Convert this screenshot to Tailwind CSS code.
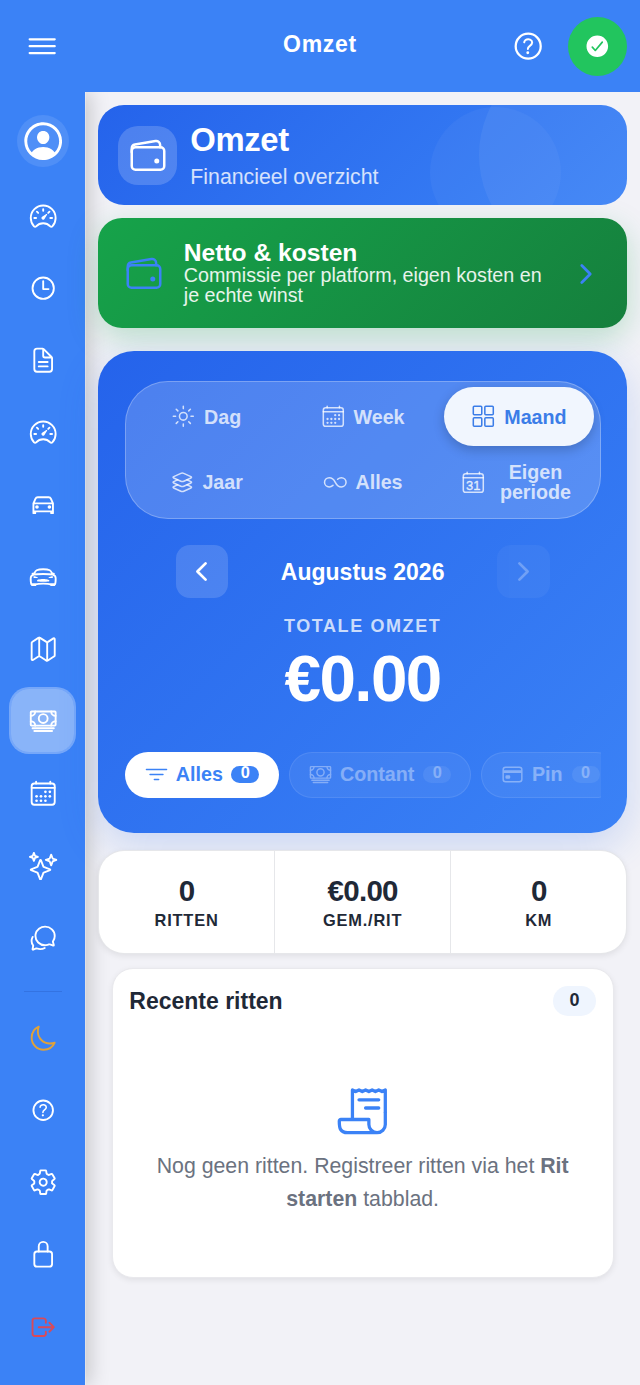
<!DOCTYPE html>
<html lang="nl">
<head>
<meta charset="utf-8">
<meta name="viewport" content="width=device-width, initial-scale=1">
<title>Omzet</title>
<script src="https://cdn.jsdelivr.net/npm/@tailwindcss/browser@4"></script>
</head>
<body class="h-[1385px] w-[640px] overflow-hidden bg-[#f2f2f7] font-['Liberation_Sans',Arial,sans-serif] text-[#1f2937]">

<!-- Icon sprite -->
<svg class="hidden" xmlns="http://www.w3.org/2000/svg">
  <defs>
    <symbol id="menu" viewBox="0 0 512 512"><path d="M80 160h352M80 256h352M80 352h352"/></symbol>
    <symbol id="help" viewBox="0 0 512 512"><path d="M256 80a176 176 0 10176 176A176 176 0 00256 80z"/><path stroke-width="28" d="M200 202.29s.84-17.5 19.57-32.57C230.68 160.77 244 158.18 256 158c10.93-.14 20.69 1.67 26.53 4.45 10 4.76 29.47 16.38 29.47 41.09 0 26-17 37.81-36.37 50.8S251 281.43 251 296"/><circle cx="250" cy="348" r="20" fill="currentColor" stroke="none"/></symbol>
    <symbol id="check" viewBox="0 0 512 512"><path fill="currentColor" stroke="none" d="M256 48C141.31 48 48 141.31 48 256s93.31 208 208 208 208-93.31 208-208S370.69 48 256 48zm108.25 138.29l-134.4 160a16 16 0 01-12 5.71h-.27a16 16 0 01-11.89-5.3l-57.6-64a16 16 0 1123.78-21.4l45.29 50.32 122.59-145.91a16 16 0 0124.5 20.58z"/></symbol>
    <symbol id="person" viewBox="0 0 512 512"><path fill="currentColor" stroke="none" d="M258.9 48C141.92 46.42 46.42 141.92 48 258.9c1.56 112.19 92.91 203.54 205.1 205.1 117 1.6 212.48-93.9 210.88-210.88C462.44 140.91 371.09 49.56 258.9 48zm126.42 327.25a4 4 0 01-6.14-.32 124.27 124.27 0 00-32.35-29.59C321.37 329 289.11 320 256 320s-65.37 9-90.83 25.34a124.24 124.24 0 00-32.35 29.58 4 4 0 01-6.14.32A175.32 175.32 0 0180 259c-1.63-97.31 78.22-178.76 175.57-179S432 158.81 432 256a175.32 175.32 0 01-46.68 119.25z"/><path fill="currentColor" stroke="none" d="M256 144c-19.72 0-37.55 7.39-50.22 20.82s-19 32-17.57 51.93C191.11 256 221.52 288 256 288s64.83-32 67.79-71.24c1.48-19.74-4.8-38.14-17.68-51.82C293.39 151.44 275.59 144 256 144z"/></symbol>
    <symbol id="wallet" viewBox="0 0 512 512"><rect x="48" y="144" width="416" height="288" rx="48" ry="48"/><path d="M411.36 144v-30A50 50 0 00352 64.9L88.64 109.85A50 50 0 0048 159v49"/><circle cx="368" cy="320" r="32" fill="currentColor" stroke="none"/></symbol>
    <symbol id="speed" viewBox="0 0 512 512"><path fill="currentColor" stroke="none" d="M326.1 231.9l-47.5 75.5a31 31 0 01-7 7 30.11 30.11 0 01-35-49l75.5-47.5a10.23 10.23 0 0111.7 0 10.06 10.06 0 012.3 14z"/><path d="M256 64C132.3 64 32 164.2 32 287.9a223.18 223.18 0 0056.3 148.5c1.1 1.2 2.1 2.4 3.2 3.5a25.19 25.19 0 0037.1-.1 173.13 173.13 0 01254.8 0 25.19 25.19 0 0037.1.1l3.2-3.5A223.18 223.18 0 00480 287.9C480 164.2 379.7 64 256 64zM256 128v32M416 288h-32M128 288H96M165.49 197.49l-22.63-22.63M346.51 197.49l22.63-22.63"/></symbol>
    <symbol id="time" viewBox="0 0 512 512"><path d="M256 64C150 64 64 150 64 256s86 192 192 192 192-86 192-192S362 64 256 64zM256 128v144h96"/></symbol>
    <symbol id="doc" viewBox="0 0 512 512"><path d="M416 221.25V416a48 48 0 01-48 48H144a48 48 0 01-48-48V96a48 48 0 0148-48h98.75a32 32 0 0122.62 9.37l141.26 141.26a32 32 0 019.37 22.62zM256 56v120a32 32 0 0032 32h120M176 288h160M176 368h160"/></symbol>
    <symbol id="car" viewBox="0 0 512 512"><path d="M80 224l37.78-88.15C123.93 121.5 139.6 112 157.11 112h197.78c17.51 0 33.18 9.5 39.33 23.85L432 224M80 224h352v144H80zM112 368v32H80v-32M432 368v32h-32v-32"/><circle cx="144" cy="288" r="16" fill="currentColor"/><circle cx="368" cy="288" r="16" fill="currentColor"/></symbol>
    <symbol id="sport" viewBox="0 0 512 512"><path d="M469.71 234.6c-7.33-9.73-34.56-16.43-46.08-33.94s-20.95-55.43-50.27-70.07S288 112 256 112s-88 4-117.36 18.63-38.75 52.52-50.27 70.07S49.62 224.87 42.29 234.6 29.8 305.84 32.94 336s9 48 9 48h86c14.08 0 18.66-5.29 47.46-8C207 373 238 372 256 372s50 1 81.58 4c28.8 2.73 33.53 8 47.46 8h85s5.86-17.84 9-48-2.04-91.67-9.33-101.4zM400 384h56v16h-56zM56 384h56v16H56zM432 192h16M64 192h16M78 211s46.35-12 178-12 178 12 178 12"/><path fill="currentColor" stroke="none" d="M364.47 309.16c-5.91-6.83-25.17-12.53-50.67-16.35S279 288 256.2 288s-33.17 1.64-57.61 4.81-42.79 8.81-50.67 16.35C136.12 320.6 153.42 333.44 167 335c13.16 1.5 39.47.95 89.31.95s76.15.55 89.31-.95c13.56-1.65 29.62-13.6 18.85-25.84zM431.57 243.05a3.23 3.23 0 00-3.1-3c-11.81-.42-23.8.42-45.07 6.69a93.88 93.88 0 00-30.08 15.06c-2.28 1.78-1.47 6.59 1.39 7.1a455.32 455.32 0 0052.82 3.1c10.59 0 21.52-3 23.55-12.44a52.41 52.41 0 00.39-16.41zM80.43 243.05a3.23 3.23 0 013.1-3c11.81-.42 23.8.42 45.07 6.69a93.88 93.88 0 0130.08 15.06c2.28 1.78 1.47 6.59-1.39 7.1a455.32 455.32 0 01-52.82 3.1c-10.59 0-21.52-3-23.55-12.44a52.41 52.41 0 01-.49-16.51z"/></symbol>
    <symbol id="map" viewBox="0 0 512 512"><path d="M313.27 124.64L198.73 51.36a32 32 0 00-29.28.35L56.51 127.49A16 16 0 0048 141.63v295.8a16 16 0 0023.49 14.14l97.82-63.79a32 32 0 0129.5-.24l111.86 73a32 32 0 0029.27-.11l115.43-75.94a16 16 0 008.63-14.2V74.57a16 16 0 00-23.49-14.14l-98 63.86a32 32 0 01-29.24.35zM328 128v336M184 48v336"/></symbol>
    <symbol id="cash" viewBox="0 0 512 512"><rect x="32" y="80" width="448" height="256" rx="16" ry="16"/><path d="M64 384h384M96 432h320M480 160a80 80 0 01-80-80M32 160a80 80 0 0080-80M480 256a80 80 0 00-80 80M32 256a80 80 0 0180 80"/><circle cx="256" cy="208" r="80"/></symbol>
    <symbol id="calendar" viewBox="0 0 512 512"><rect x="48" y="80" width="416" height="384" rx="48"/><path d="M128 48v32M384 48v32M464 160H48"/><g fill="currentColor" stroke="none"><circle cx="296" cy="232" r="24"/><circle cx="376" cy="232" r="24"/><circle cx="296" cy="312" r="24"/><circle cx="376" cy="312" r="24"/><circle cx="136" cy="312" r="24"/><circle cx="216" cy="312" r="24"/><circle cx="136" cy="392" r="24"/><circle cx="216" cy="392" r="24"/><circle cx="296" cy="392" r="24"/></g></symbol>
    <symbol id="calnum" viewBox="0 0 512 512"><rect x="48" y="80" width="416" height="384" rx="48"/><path d="M128 48v32M384 48v32M464 160H48"/><text x="256" y="408" text-anchor="middle" font-size="270" font-weight="400" font-family="Liberation Sans, Arial, sans-serif" fill="currentColor" stroke-width="8">31</text></symbol>
    <symbol id="sparkles" viewBox="0 0 512 512"><path d="M259.92 262.91L216.4 149.77a9 9 0 00-16.8 0l-43.52 113.14a9 9 0 01-5.17 5.17L37.77 311.6a9 9 0 000 16.8l113.14 43.52a9 9 0 015.17 5.17l43.52 113.14a9 9 0 0016.8 0l43.52-113.14a9 9 0 015.17-5.17l113.14-43.52a9 9 0 000-16.8l-113.14-43.52a9 9 0 01-5.17-5.17zM108 68L88 16 68 68 16 88l52 20 20 52 20-52 52-20-52-20zM426.67 117.33L400 48l-26.67 69.33L304 144l69.33 26.67L400 240l26.67-69.33L496 144l-69.33-26.67z"/></symbol>
    <symbol id="chat" viewBox="0 0 512 512"><path d="M431 320.6c-1-3.6 1.2-8.6 3.3-12.2a33.68 33.68 0 012.1-3.1A162 162 0 00464 215c.3-92.2-77.5-167-173.7-167-83.9 0-153.9 57.1-170.3 132.9a160.7 160.7 0 00-3.7 34.2c0 92.3 74.8 169.1 171 169.1 15.3 0 35.9-4.6 47.2-7.7s22.5-7.2 25.4-8.3a26.44 26.44 0 019.3-1.7 26 26 0 0110.1 2l56.7 20.1a13.52 13.52 0 003.9 1 8 8 0 008-8 12.85 12.85 0 00-.5-2.7z"/><path d="M66.46 232a146.23 146.23 0 006.39 152.67c2.31 3.49 3.61 6.19 3.21 8s-11.93 61.87-11.93 61.87a8 8 0 002.71 7.68A8.17 8.17 0 0072 464a7.26 7.26 0 002.91-.6l56.21-22a15.7 15.7 0 0112 .2c18.94 7.38 39.88 12 60.83 12A159.21 159.21 0 00284 432.11"/></symbol>
    <symbol id="moon" viewBox="0 0 512 512"><path d="M160 136c0-30.62 4.51-61.61 16-88C99.57 81.27 48 159.32 48 248c0 119.29 96.71 216 216 216 88.68 0 166.73-51.57 200-128-26.39 11.49-57.38 16-88 16-119.29 0-216-96.71-216-216z"/></symbol>
    <symbol id="settings" viewBox="0 0 512 512"><path d="M262.29 192.31a64 64 0 1057.4 57.4 64.13 64.13 0 00-57.4-57.4zM416.39 256a154.34 154.34 0 01-1.53 20.79l45.21 35.46a10.81 10.81 0 012.45 13.75l-42.77 74a10.81 10.81 0 01-13.14 4.59l-44.9-18.08a16.11 16.11 0 00-15.17 1.75A164.48 164.48 0 01325 400.8a15.94 15.94 0 00-8.82 12.14l-6.73 47.89a11.08 11.08 0 01-10.68 9.17h-85.54a11.11 11.11 0 01-10.69-8.87l-6.72-47.82a16.07 16.07 0 00-9-12.22 155.3 155.3 0 01-21.46-12.57 16 16 0 00-15.11-1.71l-44.89 18.07a10.81 10.81 0 01-13.14-4.58l-42.77-74a10.8 10.8 0 012.45-13.75l38.21-30a16.05 16.05 0 006-14.08c-.36-4.17-.58-8.33-.58-12.5s.21-8.27.58-12.35a16 16 0 00-6.07-13.94l-38.19-30A10.81 10.81 0 0149.48 186l42.77-74a10.81 10.81 0 0113.14-4.59l44.9 18.08a16.11 16.11 0 0015.17-1.75A164.48 164.48 0 01187 111.2a15.94 15.94 0 008.82-12.14l6.73-47.89A11.08 11.08 0 01213.23 42h85.54a11.11 11.11 0 0110.69 8.87l6.72 47.82a16.07 16.07 0 009 12.22 155.3 155.3 0 0121.46 12.57 16 16 0 0015.11 1.71l44.89-18.07a10.81 10.81 0 0113.14 4.58l42.77 74a10.8 10.8 0 01-2.45 13.75l-38.21 30a16.05 16.05 0 00-6.05 14.08c.33 4.14.55 8.3.55 12.47z"/></symbol>
    <symbol id="lock" viewBox="0 0 512 512"><path d="M336 208v-95a80 80 0 00-160 0v95"/><rect x="96" y="208" width="320" height="272" rx="48"/></symbol>
    <symbol id="logout" viewBox="0 0 512 512"><path d="M304 336v40a40 40 0 01-40 40H104a40 40 0 01-40-40V136a40 40 0 0140-40h152c22.09 0 48 17.91 48 40v40M368 336l80-80-80-80M176 256h256"/></symbol>
    <symbol id="sun" viewBox="0 0 512 512"><path d="M256 48v48M256 416v48M403.08 108.92l-33.94 33.94M142.86 369.14l-33.94 33.94M464 256h-48M96 256H48M403.08 403.08l-33.94-33.94M142.86 142.86l-33.94-33.94"/><circle cx="256" cy="256" r="80"/></symbol>
    <symbol id="grid" viewBox="0 0 512 512"><rect x="48" y="48" width="176" height="176" rx="20"/><rect x="288" y="48" width="176" height="176" rx="20"/><rect x="48" y="288" width="176" height="176" rx="20"/><rect x="288" y="288" width="176" height="176" rx="20"/></symbol>
    <symbol id="layers" viewBox="0 0 512 512"><path d="M434.8 137.65l-149.36-68.1c-16.19-7.4-42.69-7.4-58.88 0L77.3 137.65c-17.6 8-17.6 21.09 0 29.09l148 67.5c16.89 7.7 44.69 7.7 61.58 0l148-67.5c17.52-8 17.52-21.1-.08-29.09zM160 308.52l-82.7 37.11c-17.6 8-17.6 21.1 0 29.1l148 67.5c16.89 7.69 44.69 7.69 61.58 0l148-67.5c17.6-8 17.6-21.1 0-29.1l-79.94-38.47"/><path d="M160 204.48l-82.8 37.16c-17.6 8-17.6 21.1 0 29.1l148 67.49c16.89 7.7 44.69 7.7 61.58 0l148-67.49c17.7-8 17.7-21.1.1-29.1L352 204.48"/></symbol>
    <symbol id="infinite" viewBox="0 0 512 512"><path d="M256 256s-48-96-126-96c-54.12 0-98 43-98 96s43.88 96 98 96c30 0 56.45-13.18 78-32M256 256s48 96 126 96c54.12 0 98-43 98-96s-43.88-96-98-96c-29.37 0-56.66 13.75-78 32"/></symbol>
    <symbol id="filter" viewBox="0 0 512 512"><path d="M32 144h448M112 256h288M208 368h96"/></symbol>
    <symbol id="card" viewBox="0 0 512 512"><rect x="48" y="96" width="416" height="320" rx="56"/><path stroke-width="60" d="M48 192h416M128 300h48v20h-48z" stroke-linecap="butt"/></symbol>
    <symbol id="receipt" viewBox="0 0 512 512"><path stroke-linecap="butt" d="M160 336V48l32 16 32-16 31.94 16 32.37-16L320 64l31.79-16 31.93 16L416 48l31.92 16L480 48v224"/><path d="M480 272v112a80 80 0 01-80 80h0a80 80 0 01-80-80v-48H48a15.86 15.86 0 00-16 16c0 64 6.74 112 80 112h288M224 144h192M288 224h128"/></symbol>
    <symbol id="next" viewBox="0 0 512 512"><path stroke-width="48" d="M184 112l144 144-144 144"/></symbol>
    <symbol id="prev" viewBox="0 0 512 512"><path stroke-width="48" d="M328 112L184 256l144 144"/></symbol>
  </defs>
</svg>

<header class="relative z-30 grid h-[92px] grid-cols-[1fr_auto_1fr] items-center bg-[#3b82f6] pr-[13px] pl-[24px] text-white">
  <svg class="size-[36.4px] fill-none stroke-current stroke-[32] [stroke-linecap:round] [stroke-linejoin:round]"><use href="#menu"/></svg>
  <h1 class="mr-[11px] mb-1 text-[23px] leading-[26px] font-bold tracking-[0.7px]">Omzet</h1>
  <div class="flex items-center justify-end gap-[21.5px]">
    <svg class="size-[36.4px] fill-none stroke-current stroke-[32] [stroke-linecap:round] [stroke-linejoin:round]"><use href="#help"/></svg>
    <div class="grid size-[59px] place-items-center rounded-full bg-[#22c55e]"><svg class="size-[26.6px]"><use href="#check"/></svg></div>
  </div>
</header>

<div class="flex h-[1293px]">
  <nav class="w-[86px] shrink-0 border-r border-white/30 bg-[#3b82f6] bg-clip-padding text-white shadow-[3px_0_20px_rgba(0,0,0,0.2)] [&_svg]:size-[28.4px] [&_svg]:fill-none [&_svg]:stroke-current [&_svg]:stroke-[34] [&_svg]:[stroke-linecap:round] [&_svg]:[stroke-linejoin:round]">
    <div class="flex h-[88px] items-center justify-center pt-[10px] pl-[1px]">
      <div class="grid size-[52.5px] place-items-center rounded-full bg-white/10"><svg class="size-[46.4px]!"><use href="#person"/></svg></div>
    </div>
    <div class="grid h-[72.2px] place-items-center pl-[2px]"><svg><use href="#speed"/></svg></div>
    <div class="grid h-[72.2px] place-items-center pl-[2px]"><svg><use href="#time"/></svg></div>
    <div class="grid h-[72.2px] place-items-center pl-[2px]"><svg><use href="#doc"/></svg></div>
    <div class="grid h-[72.2px] place-items-center pl-[2px]"><svg><use href="#speed"/></svg></div>
    <div class="grid h-[72.2px] place-items-center pl-[2px]"><svg><use href="#car"/></svg></div>
    <div class="grid h-[72.2px] place-items-center pl-[2px]"><svg><use href="#sport"/></svg></div>
    <div class="grid h-[72.2px] place-items-center pl-[2px]"><svg><use href="#map"/></svg></div>
    <div class="grid h-[72.2px] place-items-center pb-[1.4px]"><div class="grid size-[67px] place-items-center rounded-[20px] border-[2.5px] border-white/30 bg-white/40 bg-clip-padding pl-[1.5px]"><svg><use href="#cash"/></svg></div></div>
    <div class="grid h-[72.2px] place-items-center pl-[2px]"><svg><use href="#calendar"/></svg></div>
    <div class="grid h-[72.2px] place-items-center pl-[2px]"><svg><use href="#sparkles"/></svg></div>
    <div class="grid h-[72.2px] place-items-center pl-[2px]"><svg><use href="#chat"/></svg></div>
    <div class="flex h-[27.8px] justify-center pt-[16.8px] pl-[1px]"><div class="h-[1.6px] w-[38px] bg-[#3373e2]"></div></div>
    <div class="grid h-[72.2px] place-items-center pl-[2px] text-[#e0a238]"><svg><use href="#moon"/></svg></div>
    <div class="grid h-[72.2px] place-items-center pl-[2px]"><svg><use href="#help"/></svg></div>
    <div class="grid h-[72.2px] place-items-center pl-[2px]"><svg><use href="#settings"/></svg></div>
    <div class="grid h-[72.2px] place-items-center pl-[2px]"><svg><use href="#lock"/></svg></div>
    <div class="grid h-[72.2px] place-items-center pl-[2px] text-[#da4a58]"><svg><use href="#logout"/></svg></div>
  </nav>

  <main class="relative z-10 flex min-w-0 grow flex-col pt-[13px] pr-[13px] pl-[12.3px] [&_svg]:shrink-0 [&_svg]:fill-none [&_svg]:stroke-current [&_svg]:stroke-[32] [&_svg]:[stroke-linecap:round] [&_svg]:[stroke-linejoin:round]">

    <!-- Page banner -->
    <section class="relative flex h-[100px] shrink-0 items-center gap-[13px] overflow-hidden rounded-[26px] bg-linear-135 from-[#2563eb] to-[#3b82f6] pl-5 text-white">
      <div class="absolute top-[-56px] left-[381px] size-[212px] rounded-full bg-white/6"></div>
      <div class="absolute top-[1.5px] left-[331.5px] size-[131px] rounded-full bg-white/4"></div>
      <div class="grid size-[59px] place-items-center rounded-[20px] bg-white/18 pt-[1.5px]"><svg class="size-[40px]"><use href="#wallet"/></svg></div>
      <div class="pt-[2px]">
        <h2 class="text-[32.8px] leading-[39px] font-bold tracking-[-0.35px]">Omzet</h2>
        <p class="mt-[3px] text-[21.3px] leading-[30px] text-white/80">Financieel overzicht</p>
      </div>
    </section>

    <!-- Net & costs link -->
    <section class="mt-[13px] flex h-[110px] shrink-0 items-center rounded-[24px] bg-linear-135 from-[#16a34a] to-[#15803d] px-[26px] text-white shadow-[0_10px_30px_rgba(22,163,74,0.25)]">
      <svg class="mt-[2px] size-[40px] text-[#3b82f6]"><use href="#wallet"/></svg>
      <div class="ml-[19.5px] grow pb-[2px]">
        <h3 class="text-[24.6px] leading-[25px] font-bold">Netto &amp; kosten</h3>
        <p class="text-[19.7px] leading-[20px] text-white/90">Commissie per platform, eigen kosten en<br>je echte winst</p>
      </div>
      <svg class="mt-[2px] size-[30px] text-[#3b82f6]"><use href="#next"/></svg>
    </section>

    <!-- Revenue card -->
    <section class="mt-[23px] flex h-[482px] shrink-0 flex-col items-center rounded-[36px] bg-linear-135 from-[#2563eb] to-[#3b82f6] px-[26.5px] pt-[30px] text-white shadow-[0_13px_40px_rgba(37,99,235,0.2)]">
      <div class="grid h-[138px] w-full shrink-0 grid-cols-3 grid-rows-2 gap-[6.5px] rounded-[43px] border-[1.6px] border-white/25 bg-white/18 px-[5.5px] pt-[5px] pb-[6px] text-[19.7px] leading-[20px] font-bold text-white/75 [&_svg]:size-[24.6px]">
        <div class="flex items-center justify-center gap-[8.2px]"><svg><use href="#sun"/></svg>Dag</div>
        <div class="flex items-center justify-center gap-[8.2px]"><svg><use href="#calendar"/></svg>Week</div>
        <div class="flex items-center justify-center gap-[8.2px] rounded-full bg-[#f1f6fe] text-[#3b7de8] shadow-[0_4px_12px_rgba(0,0,0,0.2)]"><svg><use href="#grid"/></svg>Maand</div>
        <div class="flex items-center justify-center gap-[8.2px]"><svg><use href="#layers"/></svg>Jaar</div>
        <div class="flex items-center justify-center gap-[8.2px]"><svg><use href="#infinite"/></svg>Alles</div>
        <div class="flex items-center justify-center gap-[8.2px]"><svg><use href="#calnum"/></svg><span class="w-[83px] text-center">Eigen<br>periode</span></div>
      </div>

      <div class="mt-[26px] flex h-[52.5px] w-[374px] shrink-0 items-center justify-between">
        <div class="grid size-[52.5px] place-items-center rounded-[14px] bg-white/15"><svg class="size-[29px]"><use href="#prev"/></svg></div>
        <span class="pt-[1px] text-[23px] font-bold">Augustus 2026</span>
        <div class="grid size-[52.5px] place-items-center rounded-[14px] bg-white/15 opacity-30"><svg class="size-[29px]"><use href="#next"/></svg></div>
      </div>

      <p class="mt-[18.5px] text-[18px] leading-[21px] font-bold tracking-[1.6px] text-white/75">TOTALE OMZET</p>
      <p class="mt-[6px] text-[65.6px] leading-[72px] font-bold tracking-[-1.6px]">€0.00</p>

      <div class="mt-[36.5px] flex h-[46px] w-full shrink-0 gap-[10px] overflow-hidden text-[19.7px] leading-[22px] font-bold [&_svg]:size-[23px]">
        <div class="flex w-[154px] shrink-0 items-center rounded-full bg-white pb-[1px] pl-[20px] text-[#3b82f6]"><svg><use href="#filter"/></svg><span class="ml-[8px]">Alles</span><span class="ml-[8.5px] block h-[17px] w-[28px] rounded-full bg-[#3b82f6] text-center text-[16.4px] leading-[13px] text-white">0</span></div>
        <div class="flex w-[182px] shrink-0 items-center rounded-full border-[1.6px] border-white/25 bg-white/15 pb-[1px] pl-[18.8px] opacity-40"><svg><use href="#cash"/></svg><span class="ml-[8.4px]">Contant</span><span class="ml-[9px] block h-[17px] w-[28px] rounded-full bg-white/20 text-center text-[16.4px] leading-[13px]">0</span></div>
        <div class="flex w-[138px] shrink-0 items-center rounded-full border-[1.6px] border-white/25 bg-white/15 pb-[1px] pl-[18.8px] opacity-40"><svg><use href="#card"/></svg><span class="ml-[8.4px]">Pin</span><span class="ml-[9px] block h-[17px] w-[28px] rounded-full bg-white/20 text-center text-[16.4px] leading-[13px]">0</span></div>
      </div>
    </section>

    <!-- Totals -->
    <section class="mt-[17px] grid h-[104px] shrink-0 grid-cols-3 gap-[1.6px] overflow-hidden rounded-[26px] border-[1.6px] border-[#e6e7ea] bg-[#e6e7ea] text-center font-bold shadow-[0_2px_6px_rgba(0,0,0,0.08)]">
      <div class="bg-white pt-[22px]"><p class="text-[29.5px] leading-[35px] tracking-[-0.9px]">0</p><p class="mt-[2px] text-[16.4px] leading-[20px] tracking-[0.8px]">RITTEN</p></div>
      <div class="bg-white pt-[22px]"><p class="text-[29.5px] leading-[35px] tracking-[-0.7px]">€0.00</p><p class="mt-[2px] text-[16.4px] leading-[20px] tracking-[0.8px]">GEM./RIT</p></div>
      <div class="bg-white pt-[22px]"><p class="text-[29.5px] leading-[35px] tracking-[-0.9px]">0</p><p class="mt-[2px] text-[16.4px] leading-[20px] tracking-[0.8px]">KM</p></div>
    </section>

    <!-- Recent rides -->
    <section class="mx-[13.5px] mt-[14px] flex h-[310px] shrink-0 flex-col rounded-[21px] border-[1.6px] border-[#e9e9ed] bg-white px-[16.5px] pt-[17px] shadow-[0_2px_6px_rgba(0,0,0,0.08)]">
      <div class="flex items-center justify-between">
        <h3 class="text-[23px] leading-[30px] font-bold">Recente ritten</h3>
        <span class="h-[30px] w-[43px] rounded-full bg-[#eff5fe] text-center text-[18px] leading-[29px] font-bold">0</span>
      </div>
      <div class="mt-[69px] flex flex-col items-center text-center text-[21.3px] leading-[33px] text-[#6b7280]">
        <svg class="size-[52.6px] text-[#3b82f6]"><use href="#receipt"/></svg>
        <p class="mt-[12px]">Nog geen ritten. Registreer ritten via het <b>Rit<br>starten</b> tabblad.</p>
      </div>
    </section>
  </main>
</div>
</body>
</html>
